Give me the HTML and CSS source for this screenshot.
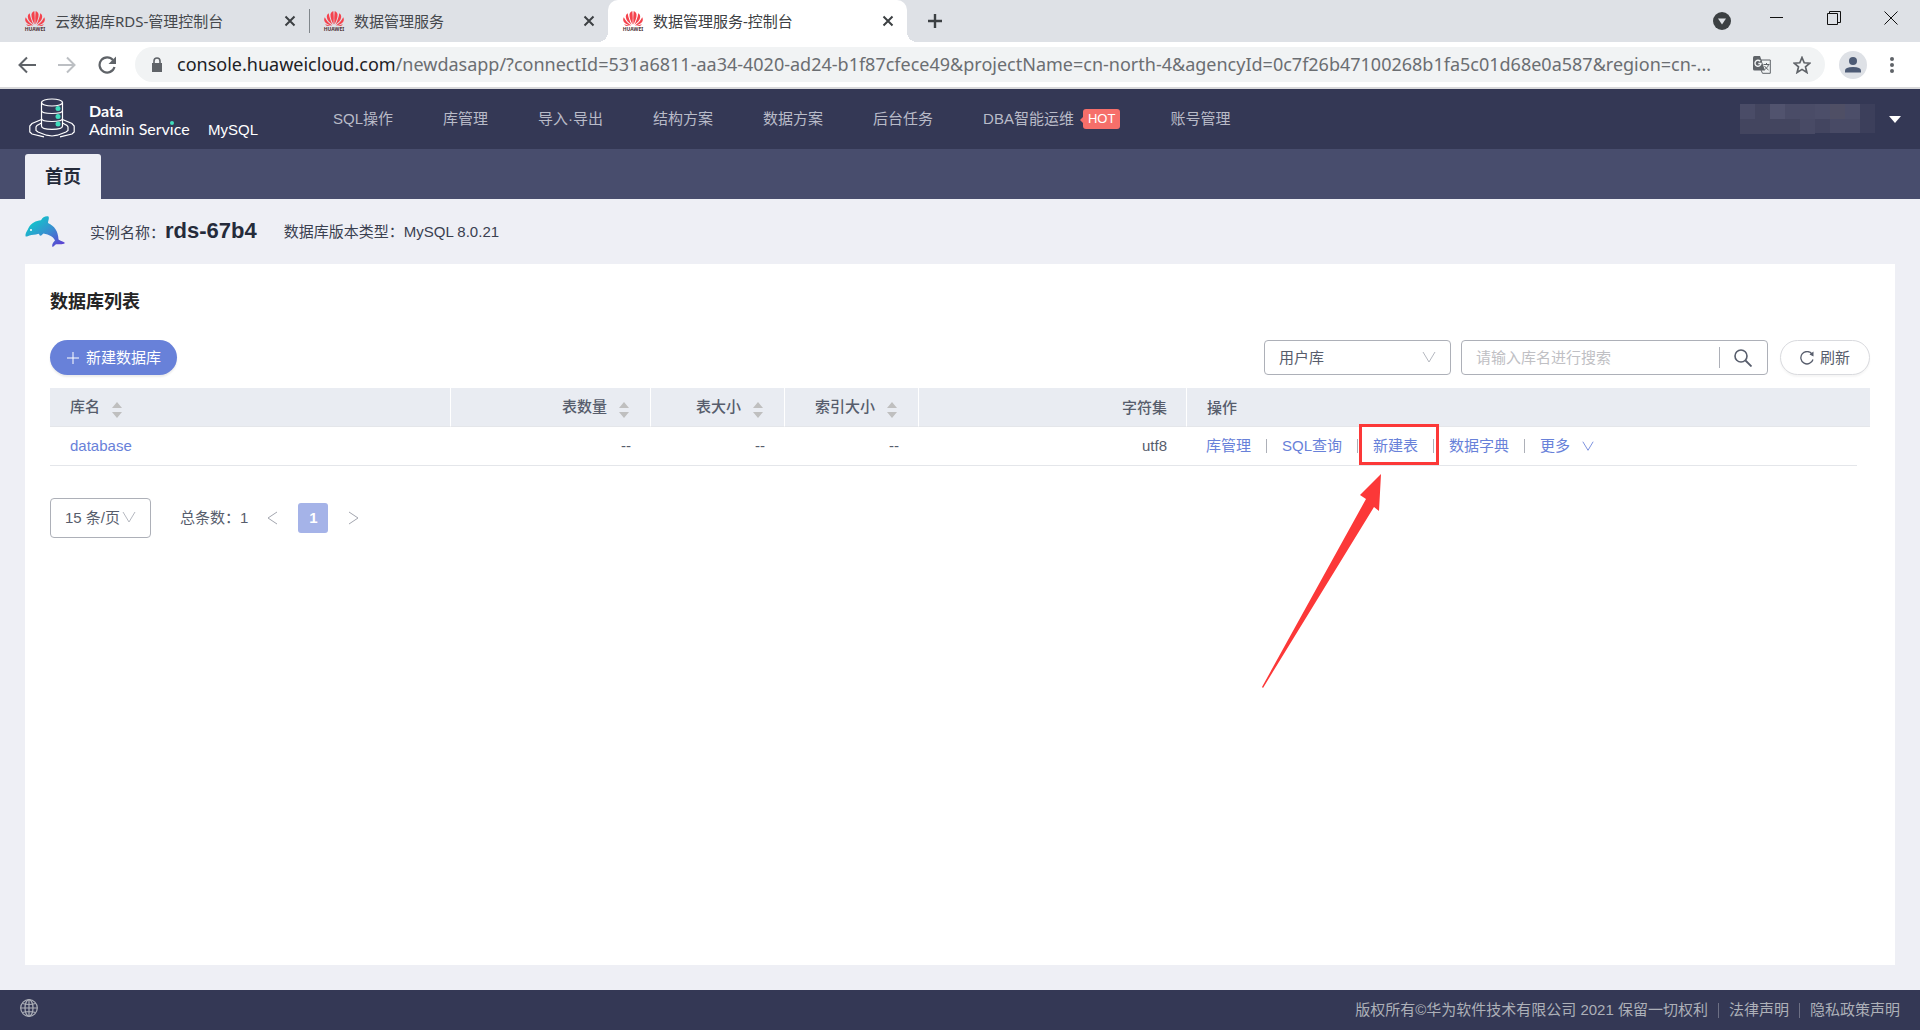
FILE: index.html
```html
<!DOCTYPE html>
<html lang="zh-CN">
<head>
<meta charset="utf-8">
<title>数据管理服务-控制台</title>
<link rel="stylesheet" href="styles.css">
</head>
<body>
<svg class="defs" aria-hidden="true">
  <symbol id="petals" viewBox="0 0 20 20">
    <g fill="#f4434d">
      <path d="M9.6 13.6C8 10.500 6.200 7 6.500 3.500 6.700 1.600 8 .4 9.400.2 9.800 4.500 9.900 9 9.600 13.600z"/>
      <path d="M10.400 13.600C12 10.500 13.800 7 13.500 3.500 13.300 1.600 12 .4 10.600.2 10.200 4.500 10.100 9 10.400 13.600z"/>
      <path d="M8.700 13.800C5.500 11.600 3 9 2.800 6 2.700 4.400 3.400 3 4.700 2.200 5.300 6.500 6.800 10.300 8.700 13.800z"/>
      <path d="M11.300 13.800C14.500 11.600 17 9 17.200 6 17.300 4.400 16.600 3 15.300 2.200 14.700 6.500 13.200 10.300 11.300 13.800z"/>
      <path d="M8.200 14.400C4.500 14 1.500 12.500.5 10.200-.1 8.600.2 7.200.8 6.200 2.500 9.800 5 12.300 8.200 14.400z"/>
      <path d="M11.800 14.400C15.500 14 18.500 12.500 19.500 10.200 20.100 8.600 19.800 7.200 19.200 6.200 17.500 9.800 15 12.300 11.800 14.400z"/>
      <path d="M8 15H3.700C2.500 15 1.700 14.200 1.300 13.300 3.500 14.200 5.500 14.700 8 15z"/>
      <path d="M12 15H16.300C17.500 15 18.300 14.200 18.700 13.300 16.500 14.200 14.500 14.700 12 15z"/>
    </g>
  </symbol>
  <symbol id="cross" viewBox="0 0 14 14"><path d="M2.500 2.500l9 9M11.500 2.500l-9 9" stroke="#3c4043" stroke-width="2" fill="none"/></symbol>
  <symbol id="down" viewBox="0 0 14 14"><path d="M1 2l6 10 6-10" stroke="currentColor" fill="none"/></symbol>
  <symbol id="sort" viewBox="0 0 10 16"><path d="M5 0l5 6H0zM0 10h10l-5 6z" fill="#bfbfbf"/></symbol>
</svg>

<header class="browser">
  <div class="tabstrip">
    <div class="tab divided"><svg class="favicon" viewBox="0 0 20 20"><use href="#petals"/><text x="10" y="20" text-anchor="middle" class="brand-text">HUAWEI</text></svg><span class="tab-title">云数据库RDS-管理控制台</span><button class="plain" aria-label="关闭"><svg class="i14"><use href="#cross"/></svg></button></div>
    <div class="tab"><svg class="favicon" viewBox="0 0 20 20"><use href="#petals"/><text x="10" y="20" text-anchor="middle" class="brand-text">HUAWEI</text></svg><span class="tab-title">数据管理服务</span><button class="plain" aria-label="关闭"><svg class="i14"><use href="#cross"/></svg></button></div>
    <div class="tab active"><svg class="favicon" viewBox="0 0 20 20"><use href="#petals"/><text x="10" y="20" text-anchor="middle" class="brand-text">HUAWEI</text></svg><span class="tab-title">数据管理服务-控制台</span><button class="plain" aria-label="关闭"><svg class="i14"><use href="#cross"/></svg></button></div>
    <button class="plain new-tab" aria-label="新标签页"><svg class="i16" viewBox="0 0 16 16"><path d="M8 1v14M1 8h14" stroke="#3c4043" stroke-width="2.400"/></svg></button>
    <div class="window-buttons">
      <button class="plain tab-search" aria-label="搜索标签页"><svg class="i18" viewBox="0 0 18 18"><circle cx="9" cy="9" r="9" fill="#3c4043"/><path d="M5 6.500h8L9 12.500z" fill="#dee1e6"/></svg></button>
      <button class="plain" aria-label="最小化"><svg class="i14" viewBox="0 0 14 14"><path d="M0 6.500h13" stroke="#111"/></svg></button>
      <button class="plain" aria-label="还原"><svg class="i14" viewBox="0 0 14 14"><path d="M.5 2.500h10v11h-10zM2.500 2.500v-2h11v11h-3" fill="none" stroke="#111"/></svg></button>
      <button class="plain" aria-label="关闭窗口"><svg class="i14" viewBox="0 0 14 14"><path d="M.5.5l13 13M13.500.5l-13 13" stroke="#111"/></svg></button>
    </div>
  </div>
  <div class="toolbar">
    <div class="history">
      <button class="plain" aria-label="后退"><svg class="i18" viewBox="0 0 18 18"><path d="M18 9H2M9 1.500L1.500 9 9 16.500" fill="none" stroke="#5f6368" stroke-width="2"/></svg></button>
      <button class="plain" aria-label="前进"><svg class="i18" viewBox="0 0 18 18"><path d="M0 9h16M9 1.500L16.500 9 9 16.500" fill="none" stroke="#bcbfc3" stroke-width="2"/></svg></button>
      <button class="plain" aria-label="重新加载"><svg class="i18" viewBox="0 0 18 18"><path d="M15 4A7.600 7.600 0 1 0 16.500 11" fill="none" stroke="#5f6368" stroke-width="2.200"/><path d="M18 .5V8h-7.500z" fill="#5f6368"/></svg></button>
    </div>
    <div class="address">
      <svg class="i16" viewBox="0 0 16 16"><path d="M3 6h10v9H3z" fill="#5f6368"/><path d="M5 7V4a3 3 0 0 1 6 0v3" fill="none" stroke="#5f6368" stroke-width="1.600"/></svg>
      <span class="url"><span class="host">console.huaweicloud.com</span>/newdasapp/?connectId=531a6811-aa34-4020-ad24-b1f87cfece49&amp;projectName=cn-north-4&amp;agencyId=0c7f26b47100268b1fa5c01d68e0a587&amp;region=cn-...</span>
      <button class="plain translate" aria-label="翻译"><svg class="i18" viewBox="0 0 18 18"><path d="M8 4h9.300v13.300H9.500L8 14z" fill="#f1f3f4" stroke="#5f6368"/><path d="M0 1.500Q0 0 1.500 0H7l5 14.500H1.500Q0 14.500 0 13z" fill="#5f6368"/><path d="M7.200 5.200A3 3 0 1 0 8 7.500H5.300" fill="none" stroke="#f1f3f4" stroke-width="1.400"/><path d="M10.500 8.500h6M13.500 7v1.500M15.500 8.500c-.5 2.500-2 4-4 5M11.500 10c1 1.500 2.500 3 4 4" fill="none" stroke="#5f6368"/></svg></button>
      <button class="plain" aria-label="收藏"><svg class="i18" viewBox="0 0 18 18"><path d="M9 1.500l2.200 5.300 5.600.4-4.300 3.700 1.400 5.600L9 13.400l-4.900 3.100 1.400-5.600L1.200 7.200l5.600-.4z" fill="none" stroke="#5f6368" stroke-width="1.700"/></svg></button>
    </div>
    <button class="plain" aria-label="用户"><svg class="i28" viewBox="0 0 28 28"><circle cx="14" cy="14" r="14" fill="#dee1e6"/><circle cx="14" cy="10" r="4" fill="#4d5b75"/><path d="M6 21.500v-2Q6 16 14 16t8 3.500v2z" fill="#4d5b75"/></svg></button>
    <button class="plain" aria-label="菜单"><svg class="i18" viewBox="0 0 18 18"><g fill="#5f6368"><circle cx="9" cy="3" r="2"/><circle cx="9" cy="9" r="2"/><circle cx="9" cy="15" r="2"/></g></svg></button>
  </div>
</header>

<div class="topbar">
  <div class="brand">
    <svg class="logo" viewBox="0 0 46 40" fill="none" stroke="#fff" stroke-width="1.200">
      <ellipse cx="23" cy="4.500" rx="10.500" ry="3.500"/>
      <path d="M12.500 4.500V28c0 4.500 21 4.500 21 0V4.500M12.500 12.500c0 4 21 4 21 0M12.500 20.500c0 4 21 4 21 0"/>
      <path d="M12.500 21.500L3 25.500.8 28v6L3 36l12 2.800M33.500 21.500l9.500 4 2.200 2.500v6L43 36l-12 2.800"/>
      <path d="M12.500 25L8 27.500 7 29v3.500L9 34l8.500 3.200 5.500.8 5.500-.8L37 34l2-1.500V29l-1-1.500-4.500-2.500"/>
      <g fill="#3fdcbc" stroke="none"><circle cx="29" cy="10.500" r="2.500"/><circle cx="29" cy="18.500" r="2.500"/><circle cx="29" cy="26" r="2.500"/></g>
    </svg>
    <div class="product"><strong>Data</strong><span>Admin Serv<span class="dotted">ı</span>ce</span></div>
    <span class="engine">MySQL</span>
  </div>
  <nav class="menu">
    <a href="#">SQL操作</a>
    <a href="#">库管理</a>
    <a href="#">导入·导出</a>
    <a href="#">结构方案</a>
    <a href="#">数据方案</a>
    <a href="#">后台任务</a>
    <a href="#">DBA智能运维<span class="hot">HOT</span></a>
    <a href="#">账号管理</a>
  </nav>
  <button class="plain account" aria-label="账号">
    <svg class="masked" viewBox="0 0 135 30" shape-rendering="crispEdges">
      <path fill="#4a4c67" d="M0 0h15v15H0zM45 0h30v15H45z"/><path fill="#43455f" d="M15 0h15v15H15zM0 15h60v15H0z"/><path fill="#51536e" d="M30 0h15v15H30z"/><path fill="#4c4e69" d="M75 0h15v15H75zM105 0h15v15h-15z"/><path fill="#4f4f65" d="M90 0h15v15H90z"/><path fill="#484a65" d="M60 15h15v15H60zM90 15h30v14H90z"/><path fill="#434560" d="M75 15h15v14H75z"/><path fill="#3c3f5b" d="M120 0h15v29h-15z"/>
    </svg>
    <svg class="caret" viewBox="0 0 12 7"><path d="M0 0h12L6 7z" fill="#fff"/></svg>
  </button>
</div>
<div class="pagetabs"><a class="pagetab" href="#">首页</a></div>

<main class="content">
  <div class="instance">
    <svg class="dolphin" viewBox="0 0 40 31">
      <defs><linearGradient id="sea" x1="0" y1="0" x2="1" y2="1"><stop offset=".15" stop-color="#10c6cb"/><stop offset=".55" stop-color="#3a8cd0"/><stop offset=".9" stop-color="#5b45d2"/></linearGradient></defs>
      <path fill="url(#sea)" d="M.5 18.500C1 16 2.500 14.500 3.500 12 6 7 11 4.500 16 4.200 17.500 1.500 20.500-.3 23.500.5 24.500 2.500 23 5 23 7 29.500 10 33 15 33.500 23.500 35.500 25 38.500 25.200 40 27 37.500 29 34 28 31 28.300 29.500 29 29 30.500 27.500 31 26.500 29 28 26.500 30 24.500 29 22 26.500 19.800 22.500 18.500L18.500 17.500C17.500 18 17 19.800 15 19.800 14.500 19 14.500 18.300 13.500 17.800 10 19 7 18.500 4.500 19.600 2.500 20.600 1 20.500.5 20.200z"/>
      <circle cx="6" cy="14" r="1" fill="#fff"/>
    </svg>
    <p class="name">实例名称：<strong>rds-67b4</strong></p>
    <p class="version">数据库版本类型：MySQL 8.0.21</p>
  </div>

  <section class="card">
    <h1>数据库列表</h1>
    <div class="actions">
      <button class="primary"><svg class="i14" viewBox="0 0 14 14"><path d="M7 1v12M1 7h12" stroke="#fff"/></svg>新建数据库</button>
      <div class="filters">
        <div class="select scope">
          <select aria-label="库类型"><option>用户库</option></select><svg class="i14"><use href="#down"/></svg>
        </div>
        <div class="search">
          <input type="text" aria-label="库名" placeholder="请输入库名进行搜索">
          <button class="plain" aria-label="搜索"><svg class="i18" viewBox="0 0 18 18"><circle cx="7" cy="7" r="6" fill="none" stroke="#575d6c" stroke-width="1.600"/><path d="M11.500 11.500L17.500 17.500" stroke="#575d6c" stroke-width="1.800"/></svg></button>
        </div>
        <button class="refresh"><svg class="i14" viewBox="0 0 14 14"><path d="M12 3A6.200 6.200 0 1 0 13 8.500" fill="none" stroke="#575d6c" stroke-width="1.300"/><path d="M13.500.5v5l-4-2z" fill="#575d6c"/></svg>刷新</button>
      </div>
    </div>

    <table class="list">
      <colgroup><col class="c-name"><col class="c-count"><col class="c-size"><col class="c-size"><col class="c-charset"><col><col class="c-gutter"></colgroup>
      <thead>
        <tr>
          <th class="left">库名<svg class="sort"><use href="#sort"/></svg></th>
          <th>表数量<svg class="sort"><use href="#sort"/></svg></th>
          <th>表大小<svg class="sort"><use href="#sort"/></svg></th>
          <th>索引大小<svg class="sort"><use href="#sort"/></svg></th>
          <th>字符集</th>
          <th class="left" colspan="2">操作</th>
        </tr>
      </thead>
      <tbody>
        <tr>
          <td class="left"><a href="#">database</a></td>
          <td>--</td><td>--</td><td>--</td>
          <td>utf8</td>
          <td class="left">
            <ul class="ops">
              <li><a href="#">库管理</a></li>
              <li><a href="#">SQL查询</a></li>
              <li class="marked"><a href="#">新建表</a>
                <svg class="pointer" viewBox="0 0 180 266" aria-hidden="true"><rect x="98.500" y="1.500" width="77" height="38" fill="none" stroke="#fc3838" stroke-width="3"/><path d="M119 50L98 71l6 4L0 263l1 1L112 83l5 4z" fill="#fc3838"/></svg>
              </li>
              <li><a href="#">数据字典</a></li>
              <li><a href="#" class="more">更多<svg class="i12"><use href="#down"/></svg></a></li>
            </ul>
          </td>
          <td class="gutter"></td>
        </tr>
      </tbody>
    </table>

    <div class="pagination">
      <div class="select size">
        <select aria-label="每页条数"><option>15 条/页</option></select><svg class="i14"><use href="#down"/></svg>
      </div>
      <span class="total">总条数：1</span>
      <button class="plain" aria-label="上一页"><svg class="i14" viewBox="0 0 14 14"><path d="M11 1L2 7l9 6" stroke="#a3a6af" fill="none"/></svg></button>
      <button class="current">1</button>
      <button class="plain" aria-label="下一页"><svg class="i14" viewBox="0 0 14 14"><path d="M3 1l9 6-9 6" stroke="#a3a6af" fill="none"/></svg></button>
    </div>
  </section>
</main>

<footer class="footer">
  <button class="plain language" aria-label="语言"><svg class="i18" viewBox="0 0 18 18"><g fill="none" stroke="#adb0b8" stroke-width="1.200"><circle cx="9" cy="9" r="8.300"/><ellipse cx="9" cy="9" rx="4" ry="8.300"/><path d="M9 .7v16.600M.7 9h16.600M2.500 4.500q6.500 2 13 0M2.500 13.500q6.500-2 13 0"/></g></svg></button>
  <p>版权所有©华为软件技术有限公司 2021 保留一切权利</p>
  <a href="#">法律声明</a>
  <a href="#">隐私政策声明</a>
</footer>
</body>
</html>
```

FILE: styles.css
```css
* { box-sizing: border-box; }

body {
  margin: 0;
  min-height: 100vh;
  display: flex;
  flex-direction: column;
  background: #eeeff5;
  color: #575d6c;
  font: 15px/20px "Liberation Sans", "Noto Sans CJK SC", sans-serif;
}

button, input, select { font: inherit; color: inherit; }
button { cursor: pointer; }
a { color: inherit; text-decoration: none; }
p, h1, ul { margin: 0; padding: 0; }
svg { display: block; flex: none; }

.defs { position: absolute; width: 0; height: 0; }
.brand-text { font-size: 5px; font-weight: 700; fill: #4a3034; }

.plain {
  display: flex;
  align-items: center;
  padding: 0;
  border: 0;
  background: none;
}

.i12 { width: 12px; height: 12px; }
.i14 { width: 14px; height: 14px; }
.i16 { width: 16px; height: 16px; }
.i18 { width: 18px; height: 18px; }
.i28 { width: 28px; height: 28px; }

/* Browser frame */
.browser {
  background: #fff;
  border-bottom: 2px solid #d9d9db;
  font-family: "Noto Sans", "Noto Sans CJK SC", sans-serif;
}

.tabstrip {
  display: flex;
  height: 42px;
  padding-left: 10px;
  background: #dee1e6;
}

.tab {
  position: relative;
  display: flex;
  align-items: center;
  gap: 10px;
  width: 299px;
  padding: 0 12px 0 15px;
  color: #45484c;
}
.tab-title { flex: 1; white-space: nowrap; }
.favicon { width: 20px; height: 20px; overflow: visible; }
.divided::after {
  content: "";
  position: absolute;
  right: -1px;
  top: 9px;
  width: 1px;
  height: 24px;
  background: #80868b;
}
.active { background: #fff; border-radius: 10px 10px 0 0; color: #3c4043; }
.active::before, .active::after {
  content: "";
  position: absolute;
  bottom: 0;
  width: 10px;
  height: 10px;
}
.active::before { left: -10px; background: radial-gradient(circle at 0 0, #dee1e6 10px, #fff 10px); }
.active::after { right: -10px; background: radial-gradient(circle at 100% 0, #dee1e6 10px, #fff 10px); }
.new-tab { padding: 0 20px; }

.window-buttons {
  display: flex;
  gap: 43px;
  margin-left: auto;
  padding: 0 22px 6px 0;
}
.tab-search { margin-right: -4px; padding-top: 6px; }

.toolbar {
  display: flex;
  align-items: center;
  height: 45px;
  padding: 0 19px 0 18px;
}
.toolbar > .plain:last-child { margin-left: 16px; }
.history { display: flex; gap: 22px; margin-right: 19px; }
.address {
  flex: 1;
  display: flex;
  align-items: center;
  height: 35px;
  margin-right: 14px;
  padding: 0 14px;
  border-radius: 18px;
  background: #f1f3f4;
}
.url {
  margin: 0 auto 2px 12px;
  white-space: nowrap;
  font-size: 18px;
  line-height: 26px;
  color: #6b6e72;
}
.host { color: #202124; }
.translate { margin-right: 22px; }

/* Console header */
.topbar {
  display: flex;
  align-items: center;
  height: 60px;
  padding: 0 19px 0 29px;
  background: #343855;
  color: #b9bbc8;
}
.brand { display: flex; width: 304px; color: #fff; }
.logo { width: 46px; height: 40px; }
.product {
  display: flex;
  flex-direction: column;
  margin: 4px 19px 0 14px;
  width: 100px;
  white-space: nowrap;
  font: 16px/18px Lato, "Liberation Sans", sans-serif;
}
.dotted { position: relative; }
.dotted::after {
  content: "";
  position: absolute;
  left: 0;
  top: 2px;
  width: 4px;
  height: 4px;
  border-radius: 50%;
  background: #3fdcbc;
}
.engine { margin-top: 22px; }
.menu { display: flex; gap: 50px; white-space: nowrap; }
.menu a { display: flex; align-items: center; }
.hot {
  position: relative;
  margin-left: 9px;
  padding: 0 5px;
  border-radius: 3px;
  background: #f66f6a;
  color: #fff;
  font-size: 13px;
}
.hot::before {
  content: "";
  position: absolute;
  left: -3px;
  top: 8px;
  border: 3px solid transparent;
  border-left: 0;
  border-right-color: #f66f6a;
}
.account { gap: 14px; margin-left: auto; }
.masked { width: 135px; height: 30px; }
.caret { width: 12px; height: 7px; }

.pagetabs {
  display: flex;
  align-items: flex-end;
  height: 50px;
  padding: 0 25px;
  background: #484d6d;
}
.pagetab {
  padding: 1px 20px 0;
  border-radius: 3px 3px 0 0;
  background: #eeeff5;
  color: #252b3a;
  font-size: 18px;
  font-weight: 700;
  line-height: 44px;
}

/* Page */
.content {
  flex: 1;
  display: flex;
  flex-direction: column;
  padding: 0 25px 25px;
}
.instance {
  display: flex;
  align-items: center;
  height: 65px;
  color: #3a4050;
}
.dolphin { width: 40px; height: 31px; }
.name { display: flex; align-items: baseline; margin-left: 25px; }
.name strong { font-size: 22px; color: #252b3a; }
.version { margin-left: 27px; }

.card { flex: 1; padding: 25px; background: #fff; }
.card h1 { font-size: 18px; line-height: 26px; color: #252525; }
.actions { display: flex; justify-content: space-between; margin: 25px 0 13px; }
.filters { display: flex; }

.primary, .refresh {
  display: flex;
  align-items: center;
  gap: 6px;
  height: 35px;
  border-radius: 18px;
}
.primary {
  padding: 0 16px;
  border: 0;
  background: #6881d9;
  color: #fff;
  box-shadow: 0 2px 2px rgba(0, 0, 0, .08);
}
.refresh {
  margin-left: 12px;
  padding: 0 19px;
  border: 1px solid #d9dade;
  background: #fff;
  box-shadow: 0 2px 2px rgba(0, 0, 0, .04);
}

.select { position: relative; color: #b5b8c0; }
.select select {
  width: 100%;
  height: 100%;
  padding: 0 14px;
  appearance: none;
  border: 1px solid #adb0b8;
  border-radius: 4px;
  background: #fff;
  color: #575d6c;
}
.select svg { position: absolute; right: 15px; top: 50%; margin-top: -8px; pointer-events: none; }
.scope { width: 187px; height: 35px; }
.search {
  display: flex;
  align-items: center;
  width: 307px;
  height: 35px;
  margin-left: 10px;
  border: 1px solid #adb0b8;
  border-radius: 4px;
}
.search input { flex: 1; min-width: 0; padding: 0 14px; border: 0; background: none; outline: 0; }
.search input::placeholder { color: #c0c0c4; opacity: 1; }
.search button { height: 21px; padding: 0 15px 0 14px; border-left: 1px solid #adb0b8; }

.list { width: 100%; table-layout: fixed; border-collapse: separate; border-spacing: 0; }
.c-name { width: 400px; }
.c-count { width: 200px; }
.c-size { width: 134px; }
.c-charset { width: 268px; }
.c-gutter { width: 13px; }
.list th, .list td {
  height: 39px;
  padding: 0 19px 0 20px;
  border-bottom: 1px solid #e4e6ea;
  text-align: right;
  white-space: nowrap;
}
.list th { padding-top: 1px; background: #e9ecf2; font-weight: 500; }
.list th + th { border-left: 1px solid #fff; }
.list .left { text-align: left; }
.list .gutter { padding: 0; border: 0; }
.list a { color: #6881d9; }
.sort { display: inline-block; width: 10px; height: 16px; margin: 3px 2px 0 12px; vertical-align: middle; }

.ops { display: flex; list-style: none; }
.ops li { display: flex; align-items: center; }
.ops li + li::before {
  content: "";
  width: 1px;
  height: 14px;
  margin: 0 15px;
  background: #adb0b8;
}
.more { display: flex; align-items: center; gap: 12px; }
.marked { position: relative; }
.pointer {
  position: absolute;
  left: -80px;
  top: -12px;
  width: 180px;
  height: 266px;
  pointer-events: none;
}

.pagination { display: flex; align-items: center; margin-top: 32px; }
.size { width: 101px; height: 40px; }
.total { margin: 0 18px 0 29px; }
.current {
  width: 30px;
  height: 30px;
  margin: 0 18px;
  padding: 0;
  border: 0;
  border-radius: 3px;
  background: #a5b3e8;
  color: #fff;
  font-weight: 700;
}

.footer {
  display: flex;
  align-items: center;
  height: 40px;
  padding: 0 20px;
  background: #343855;
  color: #adb0b8;
}
.language { padding-bottom: 4px; }
.footer p { margin-left: auto; }
.footer a { display: flex; align-items: center; }
.footer a::before {
  content: "";
  width: 1px;
  height: 15px;
  margin: 0 10px;
  background: #6c6f84;
}
```
